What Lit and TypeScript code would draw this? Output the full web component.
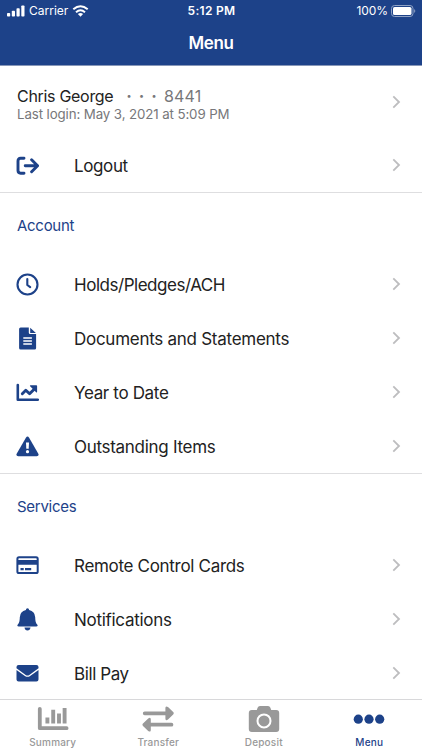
import { LitElement, html, svg, css } from "lit";
import { customElement, property } from "lit/decorators.js";

const icons: Record<string, unknown> = {
  logout: svg`<g fill="none" stroke="currentColor" stroke-width="2.9" stroke-linecap="round" stroke-linejoin="round"><path d="M8 4.300H4.600Q2 4.300 2 6.900v9.700q0 2.600 2.600 2.600H8"/><path d="M9.200 11.800h12.200M15.600 5.800l6 6-6 6"/></g>`,
  clock: svg`<g fill="none" stroke="currentColor"><circle cx="11.5" cy="11.5" r="10" stroke-width="2.1"/><path d="M11.3 6v6l2.900 2.200" stroke-width="2.1" stroke-linecap="round" stroke-linejoin="round"/></g>`,
  document: svg`<path fill="currentColor" d="M4.600.5h8.200v5.200q0 1.300 1.300 1.300h6v14q0 1.500-1.500 1.500h-14q-1.500 0-1.500-1.500V2q0-1.500 1.500-1.500zM14.200.8l5.700 5.100h-5.700z"/><path stroke="#fff" stroke-width="1.400" d="M7.300 11h8.600M7.300 14h8.600M7.300 17h8.600"/>`,
  chart: svg`<g fill="none" stroke="currentColor" stroke-linecap="round" stroke-linejoin="round"><path stroke-width="2.600" d="M1.800 4v14.700h20"/><path stroke-width="2.900" d="m6.300 12.700 3.500-3.500 3.800 3.600 5.100-5"/></g><path fill="currentColor" d="M14.600 4.200h5.700q.8 0 .8.8v5.800q0 1.200-1 .5l-6-6q-.7-.9.5-1.100z"/>`,
  warning: svg`<path fill="currentColor" d="M9.900 2.800q1.600-2.500 3.200 0l9.100 15.600q1.300 2.600-1.500 2.800H2.300q-2.800-.2-1.500-2.800z"/><path fill="#fff" d="M10 7.600h3l-.3 6.200h-2.400z"/><circle cx="11.500" cy="16.700" r="1.600" fill="#fff"/>`,
  card: svg`<rect x="1.400" y="3.300" width="20.300" height="15.800" rx="1.600" fill="none" stroke="currentColor" stroke-width="2"/><path fill="currentColor" d="M1 6h21v4.700H1zM4.500 13.900h3.200v2.300H4.500zM9 13.900h6.200v2.300H9z"/>`,
  bell: svg`<path fill="currentColor" d="M11.500.2q1.600 0 1.600 1.800 5.800 1.200 6.100 7.200c.1 4.500.8 6 2 7.300.9 1 .4 2-.9 2H2.700c-1.300 0-1.800-1-.9-2 1.200-1.300 1.900-2.800 2-7.300Q4.100 3.200 9.900 2q0-1.800 1.600-1.800zM8.500 19.600h6q-.4 2.900-3 2.900t-3-2.900z"/>`,
  mail: svg`<path fill="currentColor" d="M2.600 3h17.800q2.100 0 2.100 2v1.300l-9.200 6.600q-1.800 1.200-3.600 0L.5 6.300V5q0-2 2.100-2zM.5 7.900l8.400 6.100q2.600 1.700 5.200 0l8.400-6.100v9.600q0 2-2.100 2H2.600q-2.100 0-2.100-2z"/>`,
};

const tabIcons: Record<string, unknown> = {
  summary: svg`<path fill="none" stroke="currentColor" stroke-width="3.800" stroke-linecap="round" stroke-linejoin="round" d="M2.800 4.800v19.400h26.800"/><path fill="none" stroke="currentColor" stroke-width="3.900" d="M10.400 13.400v6.200M16.200 5.800v13.800M22 9.600v10M27.600 4v15.600"/>`,
  transfer: svg`<path fill="none" stroke="currentColor" stroke-width="3.700" stroke-linecap="round" d="M2.700 9.300h23M29.500 20.700h-23"/><path fill="currentColor" d="m26 3.100 5.200 5q1.100 1.200 0 2.400l-5.200 5q-2.600 1.800-2.600-.9V4q0-2.700 2.600-.9zM6.200 14.500 1 19.500q-1.100 1.200 0 2.400l5.200 5q2.600 1.800 2.600-.9V15.400q0-2.700-2.600-.9z"/>`,
  camera: svg`<path fill="currentColor" d="M3.800 6h5l.8-2.300Q10.200 2 12 2h8q1.800 0 2.400 1.700l.8 2.300h5q3 0 3 3v16q0 3-3 3H3.800q-3 0-3-3V9q0-3 3-3z"/><circle cx="16" cy="16.900" r="6.500" fill="none" stroke="#fff" stroke-width="2"/>`,
  dots: svg`<g fill="currentColor"><circle cx="5.300" cy="15.200" r="4.600"/><circle cx="16" cy="15.200" r="4.600"/><circle cx="26.700" cy="15.200" r="4.600"/></g>`,
};

const chevron = html`<svg width="9" height="14" viewBox="0 0 9 14" fill="none" stroke="#bdbdbf" stroke-width="1.800"><path d="m1.300 1.400 5.700 5.600-5.700 5.600"/></svg>`;

@customElement("menu-row")
class MenuRow extends LitElement {
  @property() icon = "";
  @property() label = "";
  @property({ type: Number }) spacing = 0;

  static styles = css`
    :host { display: flex; align-items: center; height: 54px; padding: 0 21px 0 16px; }
    .icon { width: 23px; height: 23px; color: #1d4289; margin-right: 35px; flex: none; }
    .label { flex: 1; padding-top: 2px; font-size: 17px; line-height: 24px; color: #222; white-space: nowrap; }
    .end { display: flex; }
  `;

  render() {
    return html`<svg class="icon" viewBox="0 0 23 23">${icons[this.icon]}</svg>
      <span class="label" style="letter-spacing:${this.spacing}px">${this.label}</span><span class="end">${chevron}</span>`;
  }
}

@customElement("app-root")
class AppRoot extends LitElement {
  static styles = css`
    :host { display: flex; flex-direction: column; height: 750px; overflow: hidden; background: #fff; font-family: Inter, "Liberation Sans", sans-serif; }
    .header { height: 65px; background: #1d4289; color: #fff; border-bottom: 1px solid #8797b8; flex: none; }
    .status { display: grid; grid-template-columns: 1fr auto 1fr; align-items: center; height: 22px; padding: 0 6px 0 7px; font-size: 12px; line-height: 22px; }
    .left, .right { display: flex; align-items: center; }
    .left svg:first-child { margin-right: 4px; }
    .left svg:last-child { margin-left: 4px; }
    .right { justify-content: flex-end; gap: 3px; }
    .right span { letter-spacing: -.1px; }
    .time { font-weight: 600; letter-spacing: .3px; }
    .title { text-align: center; font-size: 17px; font-weight: 600; line-height: 43px; letter-spacing: -.4px; }
    .content { flex: 1; min-height: 0; overflow: hidden; }
    .user { display: flex; align-items: center; height: 72px; padding: 0 21px 0 17px; }
    .info { flex: 1; padding-top: 3px; }
    .name { display: flex; font-size: 16px; line-height: 20px; letter-spacing: -.3px; color: #222; }
    .mask { color: #77777a; font-size: 9px; margin-left: 13px; letter-spacing: 7.500px; }
    .digits { color: #77777a; letter-spacing: .1px; }
    .login { font-size: 13.300px; line-height: 16px; letter-spacing: -.11px; color: #77777a; }
    .section { border-top: 1px solid #dedee0; }
    .heading { box-sizing: border-box; height: 64px; line-height: 64px; padding: 1px 0 0 17px; font-size: 15px; color: #1d4289; letter-spacing: -.28px; }
    .tabs { display: grid; grid-template-columns: repeat(4, 1fr); height: 50px; border-top: 1px solid #d8d8da; flex: none; }
    .tab { display: flex; flex-direction: column; align-items: center; color: #999; font-size: 10px; font-weight: 500; line-height: 12px; letter-spacing: .2px; padding-top: 4px; }
    .tab svg { margin-bottom: 2px; }
    .active { color: #1d4289; }
  `;

  render() {
    const row = (icon: string, label: string, spacing: number) =>
      html`<menu-row .icon=${icon} .label=${label} .spacing=${spacing}></menu-row>`;
    const tab = (icon: string, label: string, active = false) =>
      html`<div class="tab ${active ? "active" : ""}"><svg width="32" height="30" viewBox="0 0 32 30">${tabIcons[icon]}</svg>${label}</div>`;
    return html`
      <div class="header">
        <div class="status">
          <div class="left">
            <svg width="18" height="12" viewBox="0 0 18 12" fill="#fff"><rect y="8" width="3.200" height="3.500" rx=".8"/><rect x="4.800" y="5.800" width="3.200" height="5.700" rx=".8"/><rect x="9.500" y="3.200" width="3.200" height="8.300" rx=".8"/><rect x="14.300" y=".5" width="3.200" height="11" rx=".8"/></svg>
            <span>Carrier</span>
            <svg width="17" height="12" viewBox="0 0 17 12"><g fill="none" stroke="#fff" stroke-width="2"><path d="M1.300 4.300q7.200-6.200 14.400 0M4 7.200q4.500-3.800 9 0"/></g><path fill="#fff" d="M5.900 9q2.600-2 5.200 0l-2.600 2.700z"/></svg>
          </div>
          <span class="time">5:12 PM</span>
          <div class="right"><span>100%</span>
            <svg width="25" height="12" viewBox="0 0 25 12"><rect x=".5" y=".5" width="21.500" height="11" rx="3" fill="none" stroke="#8fa2c5"/><rect x="2" y="2" width="18.500" height="8" rx="1.600" fill="#fff"/><path fill="#8fa2c5" d="M23.200 4q2.200 2 0 4z"/></svg>
          </div>
        </div>
        <div class="title">Menu</div>
      </div>
      <div class="content">
        <div class="user">
          <div class="info">
            <div class="name">Chris George<span class="mask">•••</span><span class="digits">8441</span></div>
            <div class="login">Last login: May 3, 2021 at 5:09 PM</div>
          </div>${chevron}
        </div>
        ${row("logout", "Logout", -0.38)}
        <div class="section">
          <div class="heading">Account</div>
          ${row("clock", "Holds/Pledges/ACH", -0.47)}
          ${row("document", "Documents and Statements", -0.27)}
          ${row("chart", "Year to Date", -0.34)}
          ${row("warning", "Outstanding Items", -0.29)}
        </div>
        <div class="section">
          <div class="heading">Services</div>
          ${row("card", "Remote Control Cards", -0.31)}
          ${row("bell", "Notifications", -0.29)}
          ${row("mail", "Bill Pay", -0.4)}
        </div>
      </div>
      <div class="tabs">${tab("summary", "Summary")}${tab("transfer", "Transfer")}${tab("camera", "Deposit")}${tab("dots", "Menu", true)}</div>
    `;
  }
}
